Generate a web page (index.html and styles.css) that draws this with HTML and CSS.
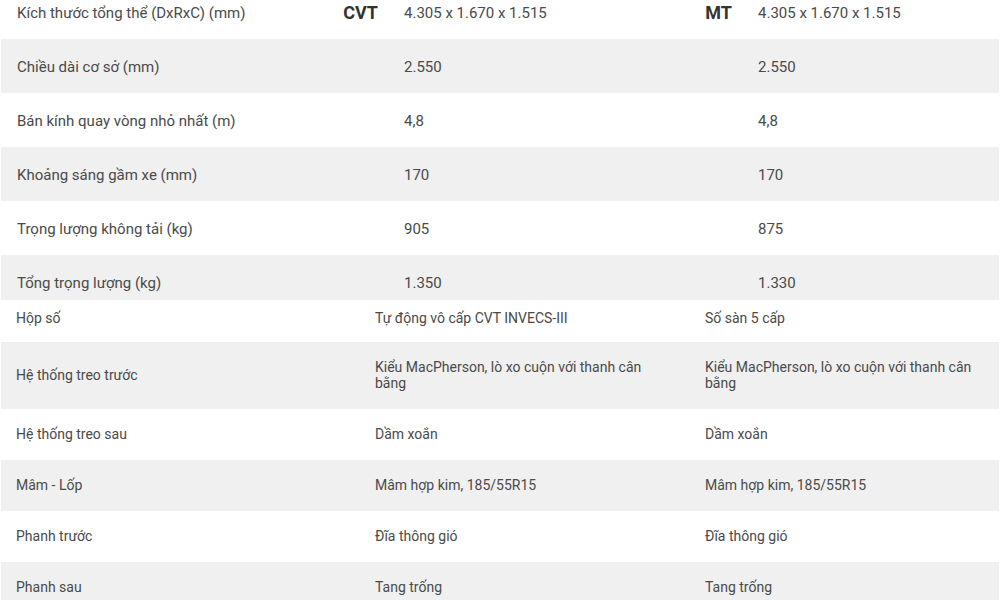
FILE: index.html
```html
<!DOCTYPE html>
<html lang="vi">
<head>
<meta charset="utf-8">
<title>Thông số kỹ thuật</title>
<link rel="stylesheet" href="styles.css">
</head>
<body>
<section class="specs specs-top">
  <div class="row first">
    <div class="label">Kích thước tổng thể (DxRxC) (mm)</div>
    <div class="head">CVT</div>
    <div class="val">4.305 x 1.670 x 1.515</div>
    <div class="head">MT</div>
    <div class="val">4.305 x 1.670 x 1.515</div>
  </div>
  <div class="row alt">
    <div class="label">Chiều dài cơ sở (mm)</div>
    <div class="head"></div>
    <div class="val">2.550</div>
    <div class="head"></div>
    <div class="val">2.550</div>
  </div>
  <div class="row">
    <div class="label">Bán kính quay vòng nhỏ nhất (m)</div>
    <div class="head"></div>
    <div class="val">4,8</div>
    <div class="head"></div>
    <div class="val">4,8</div>
  </div>
  <div class="row alt">
    <div class="label">Khoảng sáng gầm xe (mm)</div>
    <div class="head"></div>
    <div class="val">170</div>
    <div class="head"></div>
    <div class="val">170</div>
  </div>
  <div class="row">
    <div class="label">Trọng lượng không tải (kg)</div>
    <div class="head"></div>
    <div class="val">905</div>
    <div class="head"></div>
    <div class="val">875</div>
  </div>
  <div class="row alt last">
    <div class="label">Tổng trọng lượng (kg)</div>
    <div class="head"></div>
    <div class="val">1.350</div>
    <div class="head"></div>
    <div class="val">1.330</div>
  </div>
</section>
<section class="specs specs-bottom">
  <div class="row2 first">
    <div class="c1">Hộp số</div>
    <div class="c2">Tự động vô cấp CVT INVECS-III</div>
    <div class="c3">Số sàn 5 cấp</div>
  </div>
  <div class="row2 alt">
    <div class="c1">Hệ thống treo trước</div>
    <div class="c2">Kiểu MacPherson, lò xo cuộn với thanh cân bằng</div>
    <div class="c3">Kiểu MacPherson, lò xo cuộn với thanh cân bằng</div>
  </div>
  <div class="row2">
    <div class="c1">Hệ thống treo sau</div>
    <div class="c2">Dầm xoắn</div>
    <div class="c3">Dầm xoắn</div>
  </div>
  <div class="row2 alt">
    <div class="c1">Mâm - Lốp</div>
    <div class="c2">Mâm hợp kim, 185/55R15</div>
    <div class="c3">Mâm hợp kim, 185/55R15</div>
  </div>
  <div class="row2">
    <div class="c1">Phanh trước</div>
    <div class="c2">Đĩa thông gió</div>
    <div class="c3">Đĩa thông gió</div>
  </div>
  <div class="row2 alt last">
    <div class="c1">Phanh sau</div>
    <div class="c2">Tang trống</div>
    <div class="c3">Tang trống</div>
  </div>
</section>
</body>
</html>
```
FILE: styles.css
```css
html, body {
  margin: 0;
  padding: 0;
  background: #ffffff;
}
body {
  width: 1000px;
  height: 600px;
  overflow: hidden;
  font-family: Roboto, "Liberation Sans", Arial, sans-serif;
  color: #4a4a4a;
}
.specs {
  margin: 0 1px;
}
.alt {
  background: #f0f0f0;
}

/* top table */
.specs-top {
  height: 300px;
  overflow: hidden;
}
.row {
  display: grid;
  grid-template-columns: 324px 67px 288px 66px 253px;
  align-items: center;
  font-size: 15px;
  line-height: 18px;
  padding: 19px 0 17px;
}
.row.first {
  padding: 4px 0 17px;
}
.row .label {
  padding-left: 16px;
}
.row .head {
  text-align: right;
  padding-right: 14px;
  font-weight: 700;
  font-size: 18px;
  color: #333333;
}
.row .val {
  padding-left: 12px;
}

/* bottom table */
.row2 {
  display: grid;
  grid-template-columns: 359px 330px 309px;
  align-items: center;
  font-size: 14px;
  line-height: 16px;
  padding: 17px 0 18px;
}
.row2.first {
  padding: 10px 0 16px;
}
.row2.last {
  padding-bottom: 20px;
}
.row2 .c1 {
  padding-left: 15px;
}
.row2 .c2 {
  padding: 0 16px 0 15px;
}
.row2 .c3 {
  padding: 0 14px 0 15px;
}
```
